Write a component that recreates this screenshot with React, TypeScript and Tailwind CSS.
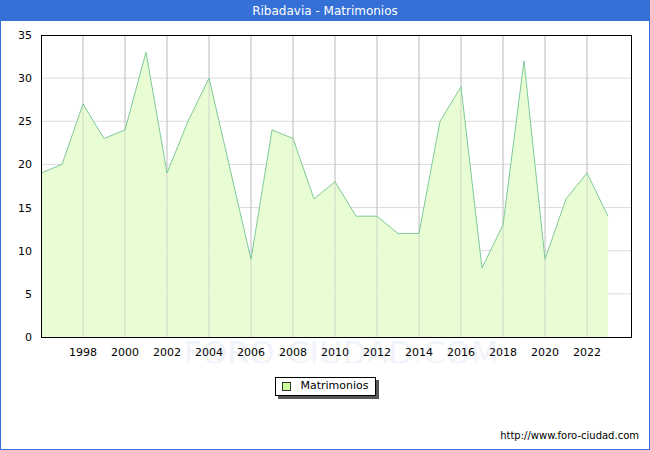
import React from "react";

const data = [19,20,27,23,24,33,19,25,30,19.5,9,24,23,16,18,14,14,12,12,25,29,8,13,32,9,16,19,14];
const X = (i: number) => 40 + i * 21;
const Y = (v: number) => 337 - v * (302 / 35);

export default function App() {
  const pts = data.map((v, i) => `${X(i)},${Y(v)}`).join(" ");
  const area = `40,337 ${pts} ${X(data.length - 1)},337`;
  const years = [1998,2000,2002,2004,2006,2008,2010,2012,2014,2016,2018,2020,2022];
  return (
    <div className="w-[650px] h-[450px] border border-[#3470d6] bg-white flex flex-col relative overflow-hidden" style={{ fontFamily: '"DejaVu Sans", sans-serif' }}>
      <div className="h-[20px] bg-[#3470d6] text-white text-[12px] flex items-center justify-center shrink-0">Ribadavia - Matrimonios</div>
      <svg width="648" height="342" viewBox="0 21 648 342" className="shrink-0">
        <text x="340" y="364" textAnchor="middle" fontSize="32" fill="#f1f3fa" fontFamily="DejaVu Sans">FORO-CIUDAD.COM</text>
        {[5,10,15,20,25,30].map(v => <line key={v} x1="40" x2="630" y1={Y(v)} y2={Y(v)} stroke="#dcdcdc" />)}
        {years.map(y => { const x = X(y - 1996); return <line key={y} x1={x} x2={x} y1="35" y2="337" stroke="#cccccc" />; })}
        <polygon points={area} fill="#e6fdce" fillOpacity="0.9" />
        {years.map(y => { const x = X(y - 1996); return <line key={"g"+y} x1={x} x2={x} y1="35" y2="337" stroke="#cccccc" strokeOpacity="0.7" />; })}
        <polyline points={pts} fill="none" stroke="#7fc99a" strokeWidth="1" />
        <rect x="40.5" y="35.5" width="590" height="302" fill="none" stroke="#000" />
        {[0,5,10,15,20,25,30,35].map(v => <text key={v} x="31" y={Y(v) + 4} textAnchor="end" fontSize="11" fill="#000">{v}</text>)}
        {years.map(y => <text key={"t"+y} x={X(y - 1996)} y="356" textAnchor="middle" fontSize="11" fill="#000">{y}</text>)}
      </svg>
      <div className="flex justify-center mt-[14px] pl-[1px]">
        <div className="flex items-center h-[19px] px-[6px] gap-[9px] border border-black bg-white shadow-[3px_3px_0_#555] text-[11px] text-black">
          <span className="w-[9px] h-[9px] border border-[#333] bg-[#ccff99]" />
          <span>Matrimonios</span>
        </div>
      </div>
      <div className="absolute right-[10px] top-[427px] text-[10px] text-black">http://www.foro-ciudad.com</div>
    </div>
  );
}
